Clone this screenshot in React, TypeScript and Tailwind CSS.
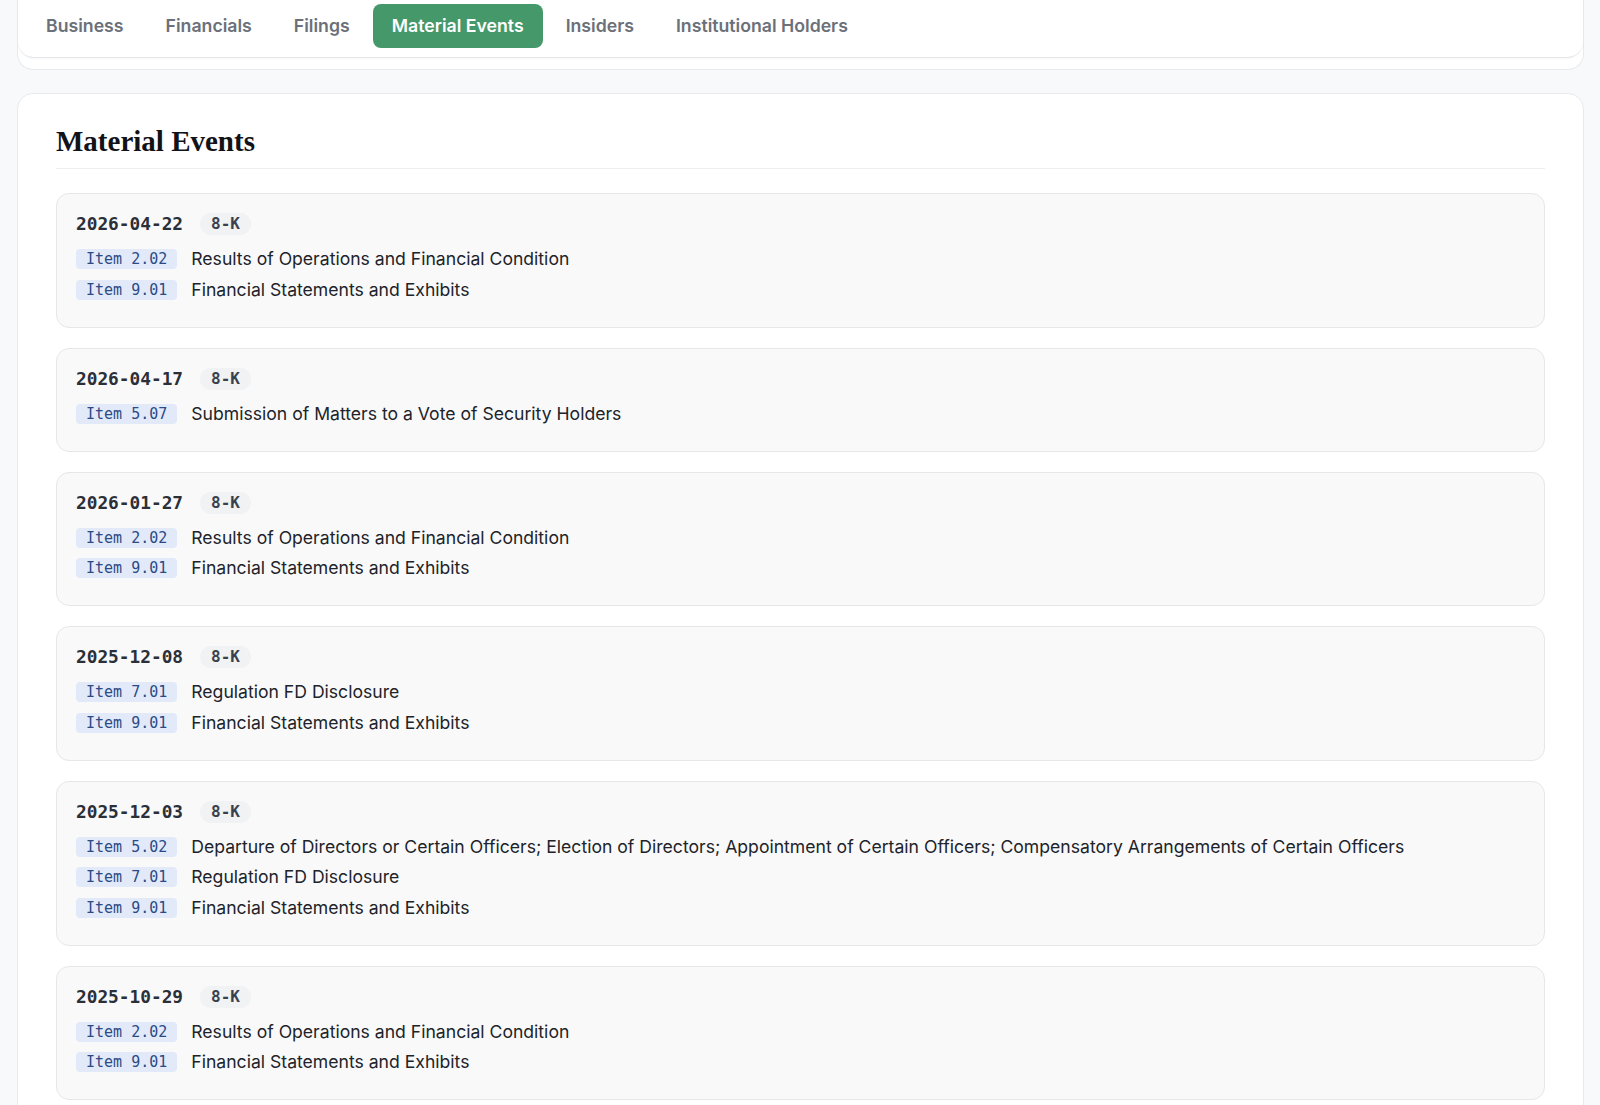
import React from "react";

type Item = { code: string; desc: string };
type Ev = { date: string; form: string; items: Item[] };

const events: Ev[] = [
  {
    date: "2026-04-22",
    form: "8-K",
    items: [
      { code: "Item 2.02", desc: "Results of Operations and Financial Condition" },
      { code: "Item 9.01", desc: "Financial Statements and Exhibits" },
    ],
  },
  {
    date: "2026-04-17",
    form: "8-K",
    items: [{ code: "Item 5.07", desc: "Submission of Matters to a Vote of Security Holders" }],
  },
  {
    date: "2026-01-27",
    form: "8-K",
    items: [
      { code: "Item 2.02", desc: "Results of Operations and Financial Condition" },
      { code: "Item 9.01", desc: "Financial Statements and Exhibits" },
    ],
  },
  {
    date: "2025-12-08",
    form: "8-K",
    items: [
      { code: "Item 7.01", desc: "Regulation FD Disclosure" },
      { code: "Item 9.01", desc: "Financial Statements and Exhibits" },
    ],
  },
  {
    date: "2025-12-03",
    form: "8-K",
    items: [
      {
        code: "Item 5.02",
        desc: "Departure of Directors or Certain Officers; Election of Directors; Appointment of Certain Officers; Compensatory Arrangements of Certain Officers",
      },
      { code: "Item 7.01", desc: "Regulation FD Disclosure" },
      { code: "Item 9.01", desc: "Financial Statements and Exhibits" },
    ],
  },
  {
    date: "2025-10-29",
    form: "8-K",
    items: [
      { code: "Item 2.02", desc: "Results of Operations and Financial Condition" },
      { code: "Item 9.01", desc: "Financial Statements and Exhibits" },
    ],
  },
];

const tabs = ["Business", "Financials", "Filings", "Material Events", "Insiders", "Institutional Holders"];

export default function App() {
  return (
    <div className="min-h-screen bg-[#f8f9fa] pl-[17px] pr-[16px] pb-10 font-['Inter',sans-serif] overflow-hidden">
      <div className="-mt-[28px] rounded-b-[16px] border border-t-0 border-[#e8eaed] bg-white pb-[11px]">
        <div className="rounded-b-[16px] border-b border-[#e5e7eb] bg-white pt-[32px] pb-[9px] pl-[9px] shadow-[0_1px_2px_rgba(0,0,0,0.04)]">
          <div className="flex items-center gap-[4px]">
            {tabs.map((t) =>
              t === "Material Events" ? (
                <div
                  key={t}
                  className="rounded-[8px] bg-[#459869] px-[19px] py-[9px] text-[17.7px] leading-[26px] font-semibold text-white"
                >
                  {t}
                </div>
              ) : (
                <div
                  key={t}
                  className="px-[19px] py-[9px] text-[17.7px] leading-[26px] font-semibold text-[#6b7079]"
                >
                  {t}
                </div>
              )
            )}
          </div>
        </div>
      </div>

      <div className="mt-[23px] rounded-[16px] border border-[#e8eaed] bg-white px-[38px] pt-[29px] pb-[40px]">
        <h2 className="border-b border-[#eceef0] pb-[9px] font-['Liberation_Serif',serif] text-[29px] leading-[36px] font-bold text-[#111318]">
          Material Events
        </h2>
        <div className="mt-[24px] flex flex-col gap-[20px]">
          {events.map((ev, i) => (
            <div
              key={i}
              className="rounded-[13px] border border-[#e6e7e9] bg-[#f9f9fa] pl-[19px] pr-[20px] pt-[17px] pb-[24px]"
            >
              <div className="flex items-center">
                <span className="font-['DejaVu_Sans_Mono',monospace] text-[17.8px] leading-[26px] font-bold text-[#2b2f38]">
                  {ev.date}
                </span>
                <span className="ml-[17px] rounded-full bg-[#f0f2f4] px-[11px] font-['DejaVu_Sans_Mono',monospace] text-[16px] leading-[22px] font-bold text-[#3b414c]">
                  {ev.form}
                </span>
              </div>
              <div className="mt-[9px] flex flex-col gap-[4.5px]">
                {ev.items.map((it, j) => (
                  <div key={j} className="flex items-center gap-[14px]">
                    <span className="rounded-[4px] bg-[#e2eafa] px-[10px] font-['DejaVu_Sans_Mono',monospace] text-[15px] leading-[20px] text-[#2c4a86]">
                      {it.code}
                    </span>
                    <span className="text-[17.6px] leading-[26px] text-[#202329]">{it.desc}</span>
                  </div>
                ))}
              </div>
            </div>
          ))}
        </div>
      </div>
    </div>
  );
}
